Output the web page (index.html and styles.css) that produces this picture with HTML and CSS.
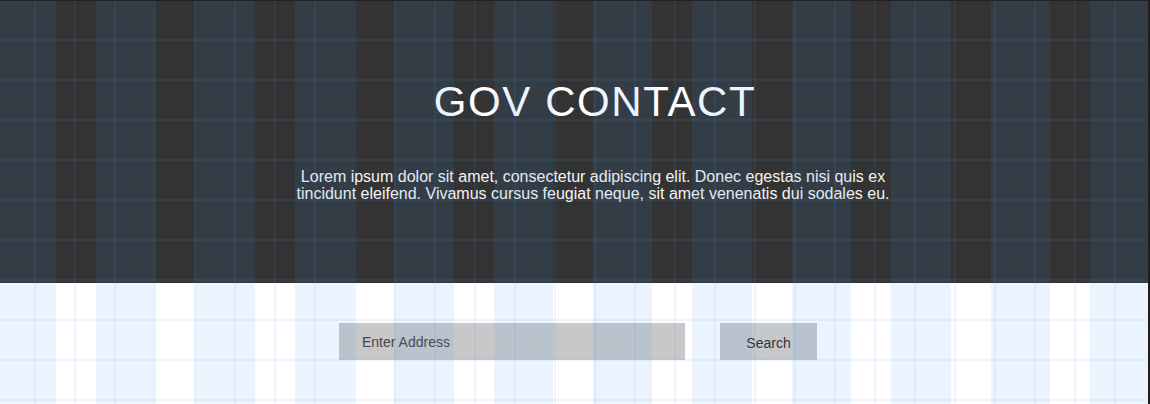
FILE: index.html
```html
<!DOCTYPE html>
<html lang="en">
<head>
<meta charset="utf-8">
<title>Gov Contact</title>
<link rel="stylesheet" href="styles.css">
</head>
<body>
<div class="page">
  <header class="hero">
    <h1 class="hero-title">GOV CONTACT</h1>
    <p class="hero-text">Lorem ipsum dolor sit amet, consectetur adipiscing elit. Donec egestas nisi quis ex tincidunt eleifend. Vivamus cursus feugiat neque, sit amet venenatis dui sodales eu.</p>
  </header>
  <main class="search">
    <form class="search-form" onsubmit="return false;">
      <input class="search-input" type="text" placeholder="Enter Address">
      <button class="search-btn" type="submit">Search</button>
    </form>
  </main>
  <div class="grid-overlay" aria-hidden="true"></div>
</div>
</body>
</html>
```

FILE: styles.css
```css
html, body {
  margin: 0;
  padding: 0;
  background: #ffffff;
}
body {
  width: 1150px;
  height: 404px;
  overflow: hidden;
  font-family: "Liberation Sans", Arial, sans-serif;
}
.page {
  position: relative;
  box-sizing: border-box;
  width: 1150px;
  height: 404px;
  border-top: 1px solid #222222;
  border-right: 2px solid #1f1f1f;
  display: flex;
  flex-direction: column;
}
.hero {
  background: #333333;
  height: 282px;
  box-sizing: border-box;
  padding: 77px 0 0 42px;
  display: flex;
  flex-direction: column;
  align-items: center;
  color: #ffffff;
}
.hero-title {
  margin: 0;
  font-weight: 400;
  font-size: 42px;
  line-height: 48px;
  letter-spacing: 1.6px;
}
.hero-text {
  margin: 42px 0 0 -4px;
  width: 620px;
  text-align: center;
  font-size: 16px;
  line-height: 17px;
  color: #f4f4f4;
}
.search {
  flex: 1;
  background: #ffffff;
  padding-top: 40px;
}
.search-form {
  display: flex;
  gap: 35px;
  margin-left: 339px;
}
.search-input {
  box-sizing: border-box;
  width: 346px;
  height: 37px;
  border: 0;
  padding: 0 0 0 23px;
  background: #c8c8c8;
  font-family: "Liberation Sans", Arial, sans-serif;
  font-size: 14px;
  color: #444444;
  outline: none;
}
.search-input::placeholder {
  color: #454545;
}
.search-btn {
  width: 97px;
  height: 37px;
  border: 0;
  padding: 2px 0 0;
  background: #c6c8cb;
  font-family: "Liberation Sans", Arial, sans-serif;
  font-size: 14px;
  color: #333333;
}
.grid-overlay {
  position: absolute;
  inset: 0;
  pointer-events: none;
  background-image:
    repeating-linear-gradient(to bottom, transparent 0 38px, rgba(60, 150, 245, 0.09) 38px 40px),
    repeating-linear-gradient(to right, transparent 0 34px, rgba(60, 150, 245, 0.09) 34px 36px, transparent 36px 40px),
    repeating-linear-gradient(to right, rgba(60, 150, 245, 0.1) 0 56px, transparent 56px 96px, rgba(60, 150, 245, 0.1) 96px 99.4px);
}
```
